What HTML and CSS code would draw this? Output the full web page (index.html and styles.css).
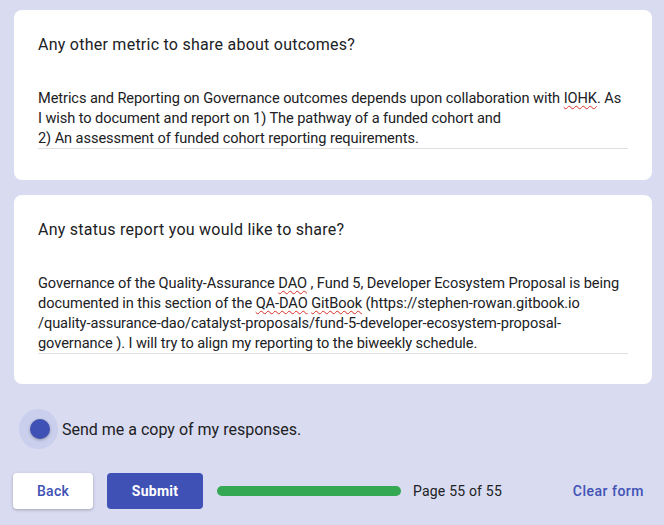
FILE: index.html
```html
<!DOCTYPE html>
<html>
<head>
<meta charset="utf-8">
<link rel="stylesheet" href="styles.css">
</head>
<body>
<div class="page">
  <section class="card card1">
    <div class="q-title">Any other metric to share about outcomes?</div>
    <div class="answer">Metrics and Reporting on Governance outcomes depends upon collaboration with <span class="sp">IOHK</span>. As<br>I wish to document and report on 1) The pathway of a funded cohort and<br>2) An assessment of funded cohort reporting requirements.</div>
  </section>
  <section class="card card2">
    <div class="q-title">Any status report you would like to share?</div>
    <div class="answer">Governance of the Quality-Assurance <span class="sp">DAO</span> , Fund 5, Developer Ecosystem Proposal is being<br>documented in this section of the <span class="sp">QA-DAO</span> <span class="sp">GitBook</span> (https://stephen-rowan.gitbook.io<br>/quality-assurance-dao/catalyst-proposals/fund-5-developer-ecosystem-proposal-<br>governance ). I will try to align my reporting to the biweekly schedule.</div>
  </section>
  <div class="copy-row">
    <span class="toggle"><span class="halo"></span><span class="knob"></span></span>
    <span class="copy-label">Send me a copy of my responses.</span>
  </div>
  <div class="nav">
    <button class="btn back">Back</button>
    <button class="btn submit">Submit</button>
    <div class="progress"><div class="bar"></div></div>
    <span class="pageno">Page 55 of 55</span>
    <span class="clear">Clear form</span>
  </div>
</div>
</body>
</html>
```
FILE: styles.css
```css
html, body {
  margin: 0;
  padding: 0;
  background: #d9dbf0;
  width: 664px;
  height: 525px;
  overflow: hidden;
}
.page {
  padding: 10px 12px 0 14px;
  font-family: Roboto, "Liberation Sans", sans-serif;
  color: #202124;
}
.card {
  background: #fff;
  border-radius: 8px;
  padding: 23px 24px 0;
  box-sizing: border-box;
}
.card1 {
  height: 170px;
}
.card2 {
  margin-top: 15px;
  height: 189px;
  padding-top: 23px;
}
.q-title {
  font-size: 16px;
  line-height: 24px;
  letter-spacing: 0.25px;
}
.answer {
  font-size: 14.6px;
  line-height: 20px;
  margin-top: 31px;
  padding-bottom: 0;
  border-bottom: 1px solid #e0e0e0;
  width: 590px;
  letter-spacing: -0.08px;
}
.sp {
  text-decoration: underline wavy #d93025;
  text-decoration-thickness: 1px;
  text-underline-offset: 2px;
}
.copy-row {
  display: flex;
  align-items: center;
  margin-top: 25px;
  height: 40px;
}
.toggle {
  position: relative;
  width: 40px;
  height: 40px;
  margin-left: 5px;
}
.halo {
  position: absolute;
  left: 0;
  top: 0;
  width: 39px;
  height: 40px;
  border-radius: 50%;
  background: #c9cfec;
}
.knob {
  position: absolute;
  left: 11px;
  top: 10px;
  width: 20px;
  height: 20px;
  border-radius: 50%;
  background: #3f51b5;
  box-shadow: 0 1px 3px rgba(0,0,0,0.3);
}
.copy-label {
  font-size: 16px;
  margin-left: 3px;
  letter-spacing: 0;
}
.nav {
  display: flex;
  align-items: center;
  margin-top: 24px;
  margin-left: -1px;
  height: 36px;
}
.btn {
  font-family: Roboto, "Liberation Sans", sans-serif;
  font-size: 14px;
  font-weight: 500;
  height: 36px;
  border: none;
  border-radius: 4px;
  letter-spacing: 0.25px;
}
.back {
  width: 80px;
  background: #fff;
  color: #3f51b5;
  box-shadow: 0 1px 3px rgba(60,64,67,0.35);
}
.submit {
  width: 96px;
  margin-left: 14px;
  background: #3f51b5;
  color: #fff;
  font-weight: 700;
}
.progress {
  margin-left: 14px;
  width: 184px;
  height: 10px;
  border-radius: 5px;
  background: #e0e0e0;
}
.bar {
  width: 100%;
  height: 100%;
  border-radius: 5px;
  background: #34a853;
}
.pageno {
  margin-left: 12px;
  font-size: 14px;
  letter-spacing: 0.2px;
}
.clear {
  margin-left: auto;
  margin-right: 8px;
  font-size: 14px;
  font-weight: 500;
  color: #3f51b5;
  letter-spacing: 0.5px;
}
```
